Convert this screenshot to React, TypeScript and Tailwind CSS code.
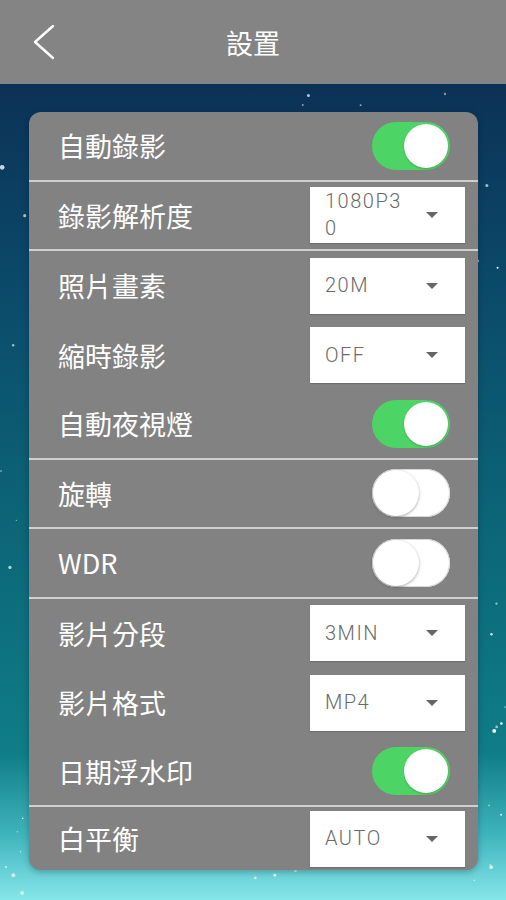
import React from "react";

type Row =
  | { label: string; kind: "toggle"; on: boolean; divider: boolean }
  | { label: string; kind: "select"; value: string; divider: boolean; wrap?: boolean };

const rows: Row[] = [
  { label: "自動錄影", kind: "toggle", on: true, divider: true },
  { label: "錄影解析度", kind: "select", value: "1080P30", divider: true, wrap: true },
  { label: "照片畫素", kind: "select", value: "20M", divider: false },
  { label: "縮時錄影", kind: "select", value: "OFF", divider: false },
  { label: "自動夜視燈", kind: "toggle", on: true, divider: true },
  { label: "旋轉", kind: "toggle", on: false, divider: true },
  { label: "WDR", kind: "toggle", on: false, divider: true },
  { label: "影片分段", kind: "select", value: "3MIN", divider: false },
  { label: "影片格式", kind: "select", value: "MP4", divider: false },
  { label: "日期浮水印", kind: "toggle", on: true, divider: true },
  { label: "白平衡", kind: "select", value: "AUTO", divider: false },
];

function makeStars() {
  let s = 12345;
  const rnd = () => {
    s = (s * 1103515245 + 12345) % 2147483648;
    return s / 2147483648;
  };
  const stars: { x: number; y: number; r: number; o: number }[] = [];
  for (let i = 0; i < 190; i++) {
    stars.push({
      x: rnd() * 506,
      y: rnd() * 816,
      r: 0.7 + rnd() * rnd() * 2,
      o: 0.5 + rnd() * 0.5,
    });
  }
  return stars;
}
const stars = makeStars();

function Toggle({ on }: { on: boolean }) {
  if (on) {
    return (
      <div className="flex h-[48px] w-[78px] items-center justify-end rounded-full bg-[#4cd464] pr-[2px]">
        <div className="h-[44px] w-[44px] rounded-full bg-white shadow-[0_1px_2px_rgba(0,0,0,0.2)]" />
      </div>
    );
  }
  return (
    <div className="flex h-[48px] w-[78px] items-center justify-start rounded-full bg-white pl-[1px] shadow-[inset_0_0_0_1px_#d8d8d8]">
      <div className="h-[46px] w-[46px] rounded-full bg-white shadow-[0_1px_3px_rgba(0,0,0,0.35)]" />
    </div>
  );
}

function Select({ value, wrap }: { value: string; wrap?: boolean }) {
  return (
    <div className="flex h-[56px] w-[155px] items-center justify-between bg-white pl-[15px] pr-[27px] shadow-[0_1px_1px_rgba(0,0,0,0.15)]">
      <div
        className={
          "text-[20px] font-light leading-[27px] tracking-[1.5px] text-[#6a6a6a] " +
          (wrap ? "w-[86px] break-all" : "")
        }
        style={{ fontFamily: 'Roboto, "Liberation Sans", Arial, sans-serif' }}
      >
        {value}
      </div>
      <svg width="12" height="6" viewBox="0 0 12 6">
        <polygon points="0,0 12,0 6,6" fill="#666666" />
      </svg>
    </div>
  );
}

export default function App() {
  return (
    <div
      className="relative flex h-[900px] w-[506px] flex-col overflow-hidden"
      style={{ fontFamily: '"Noto Sans CJK TC", "Noto Sans", sans-serif' }}
    >
      <header className="relative flex h-[84px] shrink-0 items-center justify-center bg-[#848484]">
        <svg
          className="absolute left-[32px] top-[24px]"
          width="24"
          height="36"
          viewBox="0 0 24 36"
        >
          <polyline
            points="21,2 3,18 21,34"
            fill="none"
            stroke="white"
            strokeWidth="2.4"
            strokeLinecap="round"
            strokeLinejoin="round"
          />
        </svg>
        <h1 className="text-[27px] font-normal leading-none text-white">設置</h1>
      </header>

      <main className="relative flex-1">
        <svg
          className="absolute inset-0"
          width="506"
          height="816"
          viewBox="0 0 506 816"
        >
          <defs>
            <linearGradient id="bg" x1="0" y1="0" x2="0" y2="1">
              <stop offset="0" stopColor="#0b3256" />
              <stop offset="0.25" stopColor="#0b4a6a" />
              <stop offset="0.55" stopColor="#0c6678" />
              <stop offset="0.82" stopColor="#0f7d88" />
              <stop offset="0.92" stopColor="#3fb4bd" />
              <stop offset="1" stopColor="#86e6ea" />
            </linearGradient>
          </defs>
          <rect x="0" y="0" width="506" height="816" fill="url(#bg)" />
          {stars.map((st, i) => (
            <circle key={i} cx={st.x} cy={st.y} r={st.r} fill="white" opacity={st.o} />
          ))}
        </svg>

        <div className="relative ml-[29px] mt-[28px] w-[449px] overflow-hidden rounded-[12px] bg-[#828282] shadow-[0_2px_6px_rgba(0,0,0,0.25)]">
          {rows.map((row, i) => {
            const last = i === rows.length - 1;
            return (
              <div
                key={row.label}
                className={
                  "flex items-center justify-between pl-[29px] pr-[13px] " +
                  (last ? "h-[63px] " : "h-[69.5px] ") +
                  (row.divider ? "border-b-2 border-[#cfcfcf]" : "")
                }
              >
                <span className="text-[27px] font-normal leading-none text-white">{row.label}</span>
                {row.kind === "toggle" ? (
                  <div className="mr-[15px]">
                    <Toggle on={row.on} />
                  </div>
                ) : (
                  <Select value={row.value} wrap={row.wrap} />
                )}
              </div>
            );
          })}
        </div>
      </main>
    </div>
  );
}
